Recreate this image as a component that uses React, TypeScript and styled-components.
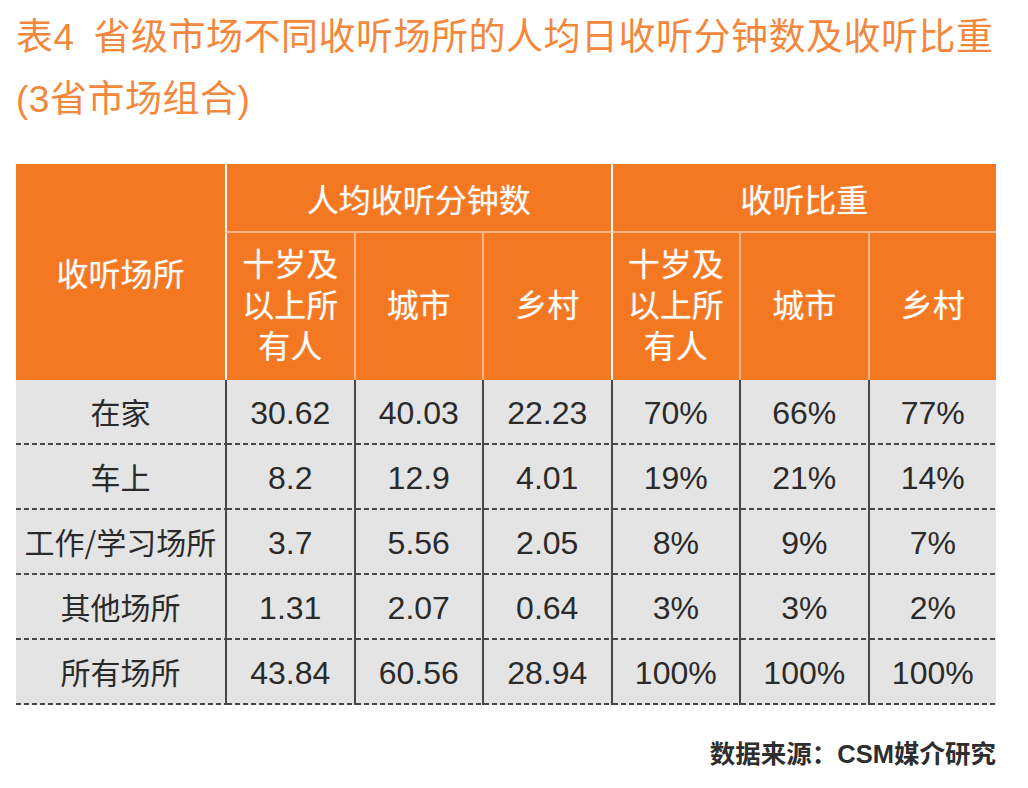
import styled, { createGlobalStyle } from 'styled-components';

const GlobalStyle = createGlobalStyle`
  * {
    box-sizing: border-box;
  }
  body {
    margin: 0;
    background: #ffffff;
    font-family: 'Liberation Sans', 'Noto Sans CJK SC', sans-serif;
  }
`;

const ORANGE = '#f47721';
const PALE = '#f9b583';
const LINE = '#474747';
const GRAY = '#e4e4e4';

type Row = {
  place: string;
  values: string[];
};

const rows: Row[] = [
  { place: '在家', values: ['30.62', '40.03', '22.23', '70%', '66%', '77%'] },
  { place: '车上', values: ['8.2', '12.9', '4.01', '19%', '21%', '14%'] },
  { place: '工作/学习场所', values: ['3.7', '5.56', '2.05', '8%', '9%', '7%'] },
  { place: '其他场所', values: ['1.31', '2.07', '0.64', '3%', '3%', '2%'] },
  { place: '所有场所', values: ['43.84', '60.56', '28.94', '100%', '100%', '100%'] },
];

const subHeads = ['all', '城市', '乡村'];

export default function App() {
  return (
    <Page>
      <GlobalStyle />
      <Title>
        表4{'\u2002'}省级市场不同收听场所的人均日收听分钟数及收听比重
        <br />
        (3省市场组合)
      </Title>

      <Table>
        <thead>
          <tr>
            <PlaceHead rowSpan={2}>收听场所</PlaceHead>
            <GroupHead colSpan={3}>人均收听分钟数</GroupHead>
            <GroupHead colSpan={3}>收听比重</GroupHead>
          </tr>
          <tr>
            {[0, 1].map((g) =>
              subHeads.map((s, i) => (
                <SubHead key={`${g}-${s}`} $first={i === 0}>
                  {s === 'all' ? (
                    <>
                      十岁及
                      <br />
                      以上所
                      <br />
                      有人
                    </>
                  ) : (
                    s
                  )}
                </SubHead>
              ))
            )}
          </tr>
        </thead>
        <tbody>
          {rows.map((r) => (
            <tr key={r.place}>
              <PlaceCell>{r.place}</PlaceCell>
              {r.values.map((v, i) => (
                <ValueCell key={i}>{v}</ValueCell>
              ))}
            </tr>
          ))}
        </tbody>
      </Table>

      <Source>数据来源：CSM媒介研究</Source>
    </Page>
  );
}

const Page = styled.div`
  width: 1028px;
  padding: 7px 32px 0 16px;
`;

const Title = styled.h1`
  margin: 0;
  font-family: 'Liberation Sans', 'Noto Sans CJK SC', sans-serif;
  font-size: 37px;
  font-weight: 400;
  line-height: 62px;
  letter-spacing: 0.5px;
  color: #f3883d;
  white-space: nowrap;
`;

const Table = styled.table`
  margin-top: 33px;
  width: 980px;
  table-layout: fixed;
  border-collapse: separate;
  border-spacing: 0;
`;

const HeadCell = styled.th`
  padding: 0;
  background: ${ORANGE};
  color: #ffffff;
  font-family: 'Liberation Sans', 'Noto Sans CJK SC', sans-serif;
  font-size: 32px;
  font-weight: 400;
  text-align: center;
  vertical-align: middle;
  text-shadow: 0 0 2px rgba(255, 255, 255, 0.35);
`;

const PlaceHead = styled(HeadCell)`
  width: 209px;
`;

const GroupHead = styled(HeadCell)`
  height: 69px;
  border-left: 2px solid #ffffff;
  border-bottom: 2px solid ${PALE};
`;

const SubHead = styled(HeadCell)<{ $first: boolean }>`
  height: 147px;
  line-height: 41px;
  border-left: 2px solid ${(p) => (p.$first ? '#ffffff' : PALE)};
`;

const BodyCell = styled.td`
  height: 65px;
  padding: 2px 0 0;
  text-align: center;
  vertical-align: middle;
  color: #2a2a2a;
  background:
    repeating-linear-gradient(90deg, ${LINE} 0 5px, transparent 5px 8px) bottom / 100% 2px no-repeat,
    ${GRAY};
`;

const PlaceCell = styled(BodyCell)`
  padding: 0 0 3px;
  font-family: 'Noto Sans CJK SC', sans-serif;
  font-size: 30px;
  line-height: 40px;
`;

const ValueCell = styled(BodyCell)`
  font-size: 32px;
  border-left: 2px solid ${LINE};
`;

const Source = styled.div`
  margin-top: 31px;
  width: 980px;
  text-align: right;
  font-family: 'Liberation Sans', 'Noto Sans CJK SC', sans-serif;
  font-size: 25.5px;
  font-weight: 700;
  line-height: 36px;
  color: #2e2e2e;
`;
